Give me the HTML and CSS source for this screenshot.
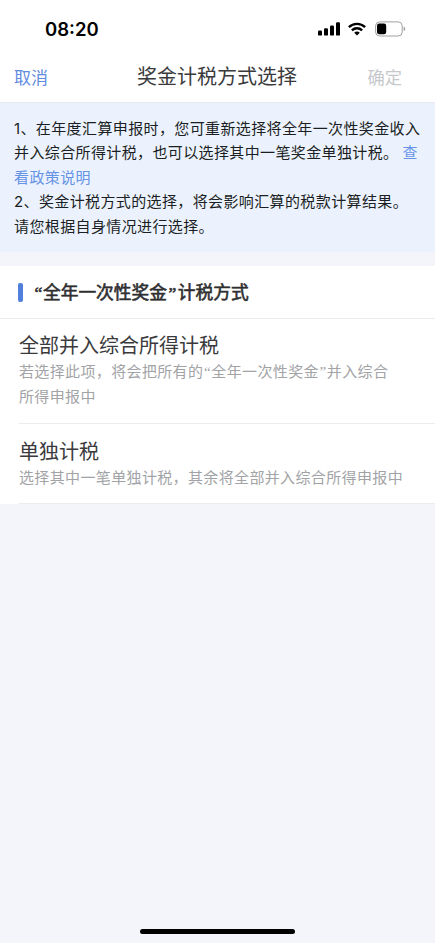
FILE: index.html
```html
<!DOCTYPE html>
<html lang="zh-CN">
<head>
<meta charset="utf-8">
<meta name="viewport" content="width=device-width, initial-scale=1">
<title>奖金计税方式选择</title>
<link rel="stylesheet" href="styles.css">
</head>
<body>
<div class="screen">
  <div class="status">
    <span class="time">08:20</span>
    <svg class="signal" width="22" height="14" viewBox="0 0 22 14"><rect x="0" y="8.6" width="4" height="5" rx="1.2"/><rect x="6" y="6.2" width="4" height="7.4" rx="1.2"/><rect x="12" y="3.4" width="4" height="10.2" rx="1.2"/><rect x="18" y="0.2" width="4" height="13.4" rx="1.2"/></svg>
    <svg class="wifi" width="18" height="14" viewBox="0 0 18 14"><g fill="none" stroke="#000" stroke-width="2.4"><path d="M0.9 5.2a11.6 11.6 0 0 1 16.2 0"/><path d="M3.9 8.4a7.3 7.3 0 0 1 10.2 0"/></g><path d="M9 13.6 6.2 10.8a4 4 0 0 1 5.6 0z"/></svg>
    <svg class="battery" width="31" height="16" viewBox="0 0 31 16"><rect x="0.6" y="0.9" width="26.6" height="14.1" rx="4" fill="none" stroke="#a0a0a0" stroke-width="1"/><rect x="2" y="2.6" width="9.2" height="10.6" rx="2.2"/><path d="M28.6 5.6c2.2.8 2.2 3.800 0 4.600z" fill="#a0a0a0"/></svg>
  </div>
  <header class="nav">
    <a class="cancel">取消</a>
    <h1>奖金计税方式选择</h1>
    <a class="confirm">确定</a>
  </header>
  <section class="notice">
    <p>1、在年度汇算申报时，您可重新选择将全年一次性奖金收入<br>并入综合所得计税，也可以选择其中一笔奖金单独计税。<a class="link"><span class="first">查</span><br>看政策说明</a></p>
    <p>2、奖金计税方式的选择，将会影响汇算的税款计算结果。<br>请您根据自身情况进行选择。</p>
  </section>
  <main class="card">
    <h2><i class="bar"></i><span><b class="q">“</b>全年一次性奖金<b class="q close">”</b>计税方式</span></h2>
    <div class="option first-option">
      <h3>全部并入综合所得计税</h3>
      <p>若选择此项，将会把所有的<span class="q">“</span>全年一次性奖金<span class="q">”</span>并入综合<br>所得申报中</p>
    </div>
    <div class="option last-option">
      <h3>单独计税</h3>
      <p>选择其中一笔单独计税，其余将全部并入综合所得申报中</p>
    </div>
  </main>
  <div class="home"></div>
</div>
</body>
</html>
```
FILE: styles.css
```css
* { box-sizing: border-box; margin: 0; padding: 0; }
body { background: #f4f5fa; font-family: "Inter", "Noto Sans CJK SC", sans-serif; color: #3a3a3c; }
h1, h2, h3, p { white-space: nowrap; }
.screen { height: 943px; display: flex; flex-direction: column; overflow: hidden; }
.status { height: 54px; background: #fff; display: flex; align-items: center; padding: 4px 29px 0 45px; }
.time { flex: 1; font-size: 18.500px; font-weight: 600; color: #000; line-height: 24px; padding-bottom: 1px; }
.signal { margin-right: 8px; }
.wifi { margin-right: 9px; }
.nav { height: 49px; background: #fff; border-bottom: 1.500px solid #e6e9ee; display: grid; grid-template-columns: 1fr auto 1fr; align-items: center; padding: 0 33px 1px 14px; }
.nav h1 { font-size: 20px; font-weight: 400; line-height: 28px; transform: translateX(9px); margin-top: -1px; }
.nav a { margin-top: -2px; }
.cancel { font-size: 17px; color: #5f8be0; }
.confirm { font-size: 17.3px; color: #c6c7cb; text-align: right; }
.notice { height: 149px; background: #ebf2fe; padding: 14px 14px 0; font-size: 15px; line-height: 24.4px; letter-spacing: 0.38px; color: #1b1e22; }
.link { color: #6593e6; }
.first { margin-left: 4px; }
.card { margin-top: 14px; background: #fff; height: 238px; }
.card h2 { height: 53px; border-bottom: 1px solid #ececee; display: flex; align-items: center; padding: 1px 0 0 18px; font-size: 17.700px; font-weight: 400; -webkit-text-stroke: 0.6px currentColor; line-height: 26px; color: #2f2f31; }
.bar { width: 5px; height: 19px; border-radius: 2px; background: #517fdc; margin-right: 11px; }
.q { display: inline-block; width: 9px; text-align: center; font-weight: inherit; line-height: 1; letter-spacing: 0; font-family: "Liberation Serif", serif; }
.close { width: 11px; }
.option { margin-left: 19px; border-bottom: 1px solid #ececee; }
.option h3 { font-size: 20px; font-weight: 400; line-height: 28px; }
.option p { font-size: 15px; letter-spacing: 0.36px; line-height: 25px; color: #a2a3a6; }
.option p .q { width: 8px; }
.first-option { height: 105px; padding-top: 13px; }
.first-option p, .last-option p { margin-top: -1px; }
.last-option { height: 80px; padding-top: 14px; }
.home { margin: auto auto 9px; width: 155px; height: 5px; border-radius: 3px; background: #000; }
```
